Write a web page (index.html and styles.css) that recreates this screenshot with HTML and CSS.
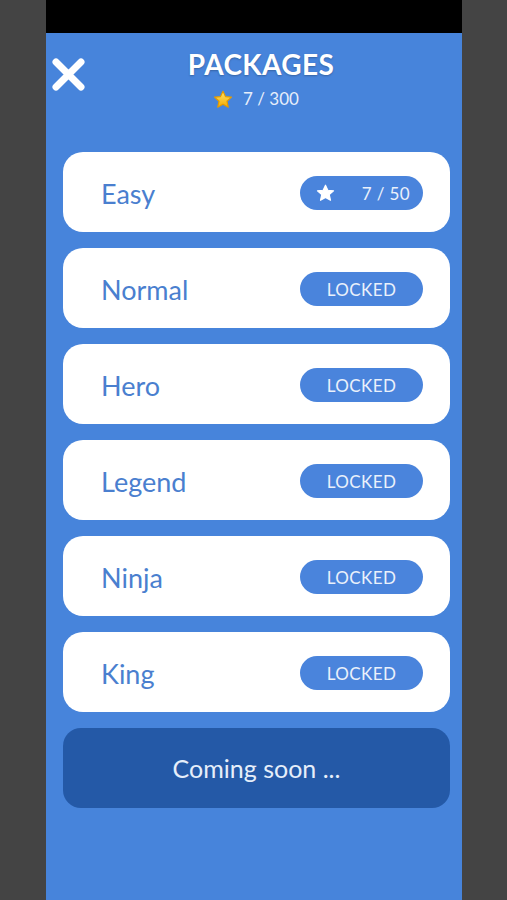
FILE: index.html
```html
<!DOCTYPE html>
<html lang="en">
<head>
    <meta charset="UTF-8">
    <meta name="viewport" content="width=device-width, initial-scale=1.0">
    <title>Packages</title>
    <link rel="stylesheet" href="styles.css">
</head>
<body>

<div class="phone">
    <div class="topBar"></div>
    <div class="panel">
        <div class="header">
            <button class="close">
                <svg width="35" height="35" viewBox="0 0 35 35">
                    <path d="M5 5 L30 30 M30 5 L5 30" stroke="#fff" stroke-width="7" stroke-linecap="round" fill="none"/>
                </svg>
            </button>
            <div class="titleBox">
                <h1>PACKAGES</h1>
                <div class="total">
                    <svg width="20" height="19" viewBox="0 0 24 23">
                        <defs>
                            <linearGradient id="gold" x1="0" y1="0" x2="0" y2="1">
                                <stop offset="0" stop-color="#ffe46a"/>
                                <stop offset="1" stop-color="#f4ab00"/>
                            </linearGradient>
                        </defs>
                        <path d="M12 1.5 L15 8 L22.3 8.7 L16.8 13.6 L18.4 20.8 L12 17.1 L5.6 20.8 L7.2 13.6 L1.7 8.7 L9 8 Z" fill="url(#gold)" stroke="#e39a00" stroke-width="1.4" stroke-linejoin="round"/>
                    </svg>
                    <span>7 / 300</span>
                </div>
            </div>
        </div>

        <!-- 关卡包列表 -->
        <div class="list">
            <div class="card">
                <span class="name">Easy</span>
                <span class="badge open">
                    <svg width="19" height="18" viewBox="0 0 24 23">
                        <path d="M12 1.5 L15 8 L22.3 8.7 L16.8 13.6 L18.4 20.8 L12 17.1 L5.6 20.8 L7.2 13.6 L1.7 8.7 L9 8 Z" fill="#fff" stroke="#fff" stroke-width="1.5" stroke-linejoin="round"/>
                    </svg>
                    <span>7 / 50</span>
                </span>
            </div>
            <div class="card">
                <span class="name">Normal</span>
                <span class="badge">LOCKED</span>
            </div>
            <div class="card">
                <span class="name">Hero</span>
                <span class="badge">LOCKED</span>
            </div>
            <div class="card">
                <span class="name">Legend</span>
                <span class="badge">LOCKED</span>
            </div>
            <div class="card">
                <span class="name">Ninja</span>
                <span class="badge">LOCKED</span>
            </div>
            <div class="card">
                <span class="name">King</span>
                <span class="badge">LOCKED</span>
            </div>
            <div class="soon">Coming soon ...</div>
        </div>
    </div>
</div>

</body>
</html>
```

FILE: styles.css
```css
* {margin:0;padding:0;border:0;outline:0;box-sizing:border-box;}
html,body {width:100%;height:100%;}
body {
    background: #444444;
    font-family: Lato, "Open Sans", sans-serif;
}
.phone{
    width: 416px;
    height: 100%;
    margin-left: 46px;
    display: flex;
    flex-direction: column;
}
.topBar{
    height: 33px;
    background: #000;
}
.panel{
    flex: 1;
    background: #4784db;
}
.header{
    display: flex;
    align-items: flex-start;
    padding-top: 14px;
}
.close{
    width: 35px;
    height: 35px;
    margin-left: 5px;
    margin-top: 10px;
    background: none;
    cursor: pointer;
}
.close svg{display: block;}
.titleBox{
    flex: 1;
    margin-right: 36px;
    text-align: center;
}
.titleBox h1{
    padding-left: 10px;
    font-size: 28px;
    line-height: 34px;
    font-weight: 700;
    color: #fff;
    letter-spacing: 0.4px;
    text-shadow: 0 1px 2px rgba(0,0,0,0.25);
}
.total{
    display: flex;
    justify-content: center;
    align-items: center;
    gap: 10px;
    margin-top: 8px;
    font-size: 17px;
    line-height: 20px;
    color: #e6eefa;
}
.total svg{display: block;}

.list{
    display: flex;
    flex-direction: column;
    gap: 16px;
    padding: 43px 12px 0 17px;
}
.card{
    height: 80px;
    background: #fff;
    border-radius: 20px;
    display: flex;
    align-items: center;
    justify-content: space-between;
    padding: 2px 27px 0 38px;
}
.name{
    font-size: 27px;
    color: #4a7fcf;
}
.badge{
    width: 123px;
    height: 34px;
    border-radius: 17px;
    background: #4a84dc;
    color: #eaf1fb;
    font-size: 17px;
    letter-spacing: 0.4px;
    display: flex;
    align-items: center;
    justify-content: center;
}
.badge.open{
    justify-content: space-between;
    padding: 0 13px 0 16px;
}
.badge.open svg{display: block;}
.soon{
    height: 80px;
    border-radius: 18px;
    background: #2459a7;
    color: #e6eefa;
    font-size: 25px;
    display: flex;
    align-items: center;
    justify-content: center;
}
```
